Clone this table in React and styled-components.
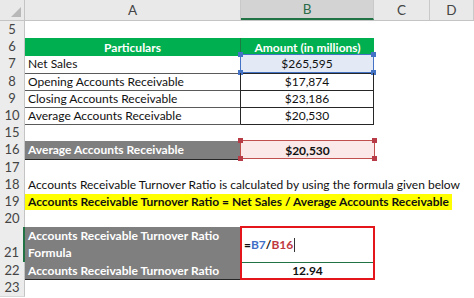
import React from "react";
import styled, { createGlobalStyle, css } from "styled-components";

const COLS = "25px 216px 133px 56px 1fr";
const ROW_H = 17.2;

const GlobalStyle = createGlobalStyle`
  *, *::before, *::after { box-sizing: border-box; }
  html, body { margin: 0; padding: 0; background: #fff; }
  body { font-family: Lato, "Liberation Sans", sans-serif; }
`;

const Sheet = styled.div`
  width: 474px;
  height: 298px;
  overflow: hidden;
  background: #fff;
  color: #111;
  font-size: 12px;
`;

const HeaderRow = styled.div`
  display: grid;
  grid-template-columns: ${COLS};
  height: 21px;
  background: #e9e9e9;
  border-bottom: 1px solid #c4c4c4;
`;

const Corner = styled.div`
  position: relative;
  border-right: 1px solid #c4c4c4;
  &::after {
    content: "";
    position: absolute;
    right: 3px;
    bottom: 3px;
    border-left: 10px solid transparent;
    border-bottom: 10px solid #b8b8b8;
  }
`;

const ColHead = styled.div`
  display: flex;
  align-items: center;
  justify-content: center;
  font-size: 13.5px;
  color: #444;
  border-right: 1px solid #c9c9c9;
  ${(p) =>
    p.$active &&
    css`
      background: #d3d3d3;
      color: #2a6b48;
      border-bottom: 2px solid #217346;
    `}
`;

const Row = styled.div`
  display: grid;
  grid-template-columns: ${COLS};
  height: ${(p) => (p.$tall ? ROW_H * 2 : ROW_H)}px;
`;

const RowNum = styled.div`
  display: flex;
  align-items: ${(p) => (p.$tall ? "flex-end" : "center")};
  justify-content: center;
  background: #ececec;
  color: #444;
  font-size: 13px;
  line-height: ${ROW_H}px;
  border-right: ${(p) => (p.$active ? "2px solid #217346" : "1px solid #c4c4c4")};
  border-bottom: 1px solid #d8d8d8;
`;

const Cell = styled.div`
  position: relative;
  display: flex;
  flex-direction: column;
  justify-content: center;
  align-items: ${(p) => (p.$center ? "center" : "flex-start")};
  padding: 0 3px;
  white-space: nowrap;
  line-height: ${ROW_H}px;
  grid-column: ${(p) => (p.$span ? `span ${p.$span}` : "auto")};
  background: ${(p) => p.$fill || "transparent"};
  color: ${(p) => p.$color || "#111"};
  font-weight: ${(p) => (p.$bold ? 700 : 400)};
  border-right: ${(p) => (p.$br ? `1px solid ${p.$br}` : "none")};
  border-bottom: ${(p) => (p.$bb ? `1px solid ${p.$bb}` : "none")};
`;

const Highlight = styled.span`
  display: inline-block;
  margin-left: -3px;
  padding: 0 3px;
  background: #ffff00;
  font-weight: 700;
  line-height: ${ROW_H - 1}px;
`;

const Selection = styled.div`
  position: absolute;
  left: -1px;
  top: -1px;
  right: -1px;
  height: ${(p) => p.$h}px;
  border: ${(p) => p.$w || 1}px solid ${(p) => p.$color};
  background: ${(p) => p.$fill || "transparent"};
  pointer-events: none;
  z-index: ${(p) => (p.$fill ? 0 : 2)};
`;

const Handle = styled.span`
  position: absolute;
  width: 5px;
  height: 5px;
  background: ${(p) => p.$color};
  ${(p) => (p.$top ? "top: -3px;" : "bottom: -3px;")}
  ${(p) => (p.$left ? "left: -3px;" : "right: -3px;")}
`;

const CellText = styled.span`
  position: relative;
  z-index: 1;
  font-weight: ${(p) => (p.$bold ? 700 : "inherit")};
`;

const Ref = styled.span`
  color: ${(p) => p.$color};
`;

const Caret = styled.span`
  display: inline-block;
  width: 1px;
  height: 14px;
  margin-left: 1px;
  background: #333;
  vertical-align: -3px;
`;

const Handles = ({ color }) => (
  <>
    <Handle $color={color} $top $left />
    <Handle $color={color} $top />
    <Handle $color={color} $left />
    <Handle $color={color} />
  </>
);

const GREEN = "#00b050";
const GREY = "#7f7f7f";
const LINE = "#5a5a5a";
const DARK = "#262626";

export default function App() {
  return (
    <Sheet>
      <GlobalStyle />
      <HeaderRow>
        <Corner />
        <ColHead>A</ColHead>
        <ColHead $active>B</ColHead>
        <ColHead>C</ColHead>
        <ColHead>D</ColHead>
      </HeaderRow>

      <Row>
        <RowNum>5</RowNum>
      </Row>
      <Row>
        <RowNum>6</RowNum>
        <Cell $fill={GREEN} $color="#fff" $bold $center $br="#1d7a43">Particulars</Cell>
        <Cell $fill={GREEN} $color="#fff" $bold $center>Amount (in millions)</Cell>
      </Row>
      <Row>
        <RowNum>7</RowNum>
        <Cell $bb={LINE} $br={DARK}>Net Sales</Cell>
        <Cell $center $bb={DARK} $br={DARK}>
          <Selection $h={ROW_H + 1} $color="#4472c4" $fill="#e3eaf6">
            <Handles color="#4472c4" />
          </Selection>
          <CellText>$265,595</CellText>
        </Cell>
      </Row>
      <Row>
        <RowNum>8</RowNum>
        <Cell $bb={LINE} $br={DARK}>Opening Accounts Receivable</Cell>
        <Cell $center $bb={DARK} $br={DARK}>$17,874</Cell>
      </Row>
      <Row>
        <RowNum>9</RowNum>
        <Cell $bb={LINE} $br={DARK}>Closing Accounts Receivable</Cell>
        <Cell $center $bb={DARK} $br={DARK}>$23,186</Cell>
      </Row>
      <Row>
        <RowNum>10</RowNum>
        <Cell $bb={LINE} $br={DARK}>Average Accounts Receivable</Cell>
        <Cell $center $bb={DARK} $br={DARK}>$20,530</Cell>
      </Row>
      <Row>
        <RowNum>15</RowNum>
      </Row>
      <Row>
        <RowNum>16</RowNum>
        <Cell $fill={GREY} $color="#fff" $bold $bb={DARK} $br={DARK}>Average Accounts Receivable</Cell>
        <Cell $center $bold>
          <Selection $h={ROW_H + 1} $color="#c0504d" $fill="#fbe8e8">
            <Handles color="#b83b48" />
          </Selection>
          <CellText>$20,530</CellText>
        </Cell>
      </Row>
      <Row>
        <RowNum>17</RowNum>
      </Row>
      <Row>
        <RowNum>18</RowNum>
        <Cell $span={4}>
          Accounts Receivable Turnover Ratio is calculated by using the formula given below
        </Cell>
      </Row>
      <Row>
        <RowNum>19</RowNum>
        <Cell $span={4}>
          <Highlight>Accounts Receivable Turnover Ratio = Net Sales / Average Accounts Receivable</Highlight>
        </Cell>
      </Row>
      <Row>
        <RowNum>20</RowNum>
      </Row>
      <Row $tall>
        <RowNum $tall $active>21</RowNum>
        <Cell $fill={GREY} $color="#fff" $bold $bb={DARK} $br={DARK}>
          <span>Accounts Receivable Turnover Ratio</span>
          <span>Formula</span>
        </Cell>
        <Cell $bb="#217346">
          <Selection $h={ROW_H * 3 + 2} $w={2} $color="#e4161c" />
          <CellText $bold>
            =<Ref $color="#3f6fc6">B7</Ref>/<Ref $color="#c0393f">B16</Ref>
            <Caret />
          </CellText>
        </Cell>
      </Row>
      <Row>
        <RowNum>22</RowNum>
        <Cell $fill={GREY} $color="#fff" $bold $bb={DARK} $br={DARK}>Accounts Receivable Turnover Ratio</Cell>
        <Cell $center $bold>12.94</Cell>
      </Row>
      <Row>
        <RowNum>23</RowNum>
      </Row>
    </Sheet>
  );
}
